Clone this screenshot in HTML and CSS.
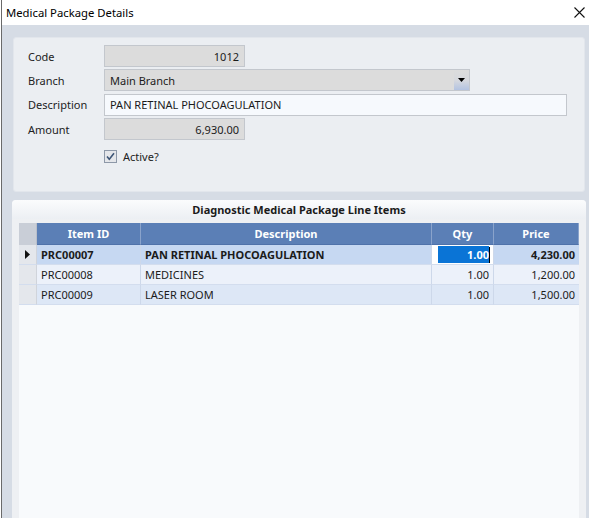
FILE: index.html
```html
<!DOCTYPE html>
<html>
<head>
<meta charset="utf-8">
<link rel="stylesheet" href="styles.css">
</head>
<body>
<div class="window">
  <div class="titlebar">
    <span class="title">Medical Package Details</span>
    <svg class="close" width="11" height="11" viewBox="0 0 11 11"><path d="M0.5 0.5 L10.5 10.5 M10.5 0.5 L0.5 10.5" stroke="#111" stroke-width="1.1" fill="none"/></svg>
  </div>
  <div class="client">
    <div class="panel">
      <div class="form">
        <div class="frow">
          <span class="label">Code</span>
          <div class="field ro w-short num">1012</div>
        </div>
        <div class="frow">
          <span class="label">Branch</span>
          <div class="field ro combo">
            <span class="combo-text">Main Branch</span>
            <span class="combo-btn"><svg width="7" height="4" viewBox="0 0 7 4"><path d="M0 0 H7 L3.5 4 Z" fill="#000"/></svg></span>
          </div>
        </div>
        <div class="frow">
          <span class="label">Description</span>
          <div class="field edit w-long">PAN RETINAL PHOCOAGULATION</div>
        </div>
        <div class="frow">
          <span class="label">Amount</span>
          <div class="field ro w-short num">6,930.00</div>
        </div>
        <div class="crow">
          <svg class="check" width="13" height="13" viewBox="0 0 13 13"><rect x="0.5" y="0.5" width="12" height="12" fill="#e4e6ea" stroke="#8d98a8"/><path d="M3 6.5 L5.3 9.2 L10 3.3" stroke="#3d5576" stroke-width="1.6" fill="none"/></svg>
          <span class="clabel">Active?</span>
        </div>
      </div>
    </div>
    <div class="group">
      <div class="group-title">Diagnostic Medical Package Line Items</div>
      <div class="grid">
        <div class="grow ghead">
          <div class="c ind"></div>
          <div class="c id">Item ID</div>
          <div class="c desc">Description</div>
          <div class="c qty">Qty</div>
          <div class="c price">Price</div>
        </div>
        <div class="grow r1">
          <div class="c ind"><svg width="5" height="9" viewBox="0 0 5 9"><path d="M0 0 L5 4.5 L0 9 Z" fill="#111"/></svg></div>
          <div class="c id">PRC00007</div>
          <div class="c desc">PAN RETINAL PHOCOAGULATION</div>
          <div class="c qty editing"><span class="sel">1.00</span><span class="caret"></span></div>
          <div class="c price">4,230.00</div>
        </div>
        <div class="grow r2">
          <div class="c ind"></div>
          <div class="c id">PRC00008</div>
          <div class="c desc">MEDICINES</div>
          <div class="c qty">1.00</div>
          <div class="c price">1,200.00</div>
        </div>
        <div class="grow r3">
          <div class="c ind"></div>
          <div class="c id">PRC00009</div>
          <div class="c desc">LASER ROOM</div>
          <div class="c qty">1.00</div>
          <div class="c price">1,500.00</div>
        </div>
        <div class="gempty"></div>
      </div>
    </div>
  </div>
</div>
</body>
</html>
```

FILE: styles.css
```css
* { box-sizing: border-box; }
html, body { margin: 0; padding: 0; }
body {
  width: 589px;
  height: 518px;
  overflow: hidden;
  background: #ffffff;
  font-family: "Noto Sans", "Open Sans", sans-serif;
  font-size: 11px;
  color: #1b1b1b;
}
.window {
  margin-left: 1px;
  border-left: 1px solid #6a6a6a;
  height: 518px;
  display: flex;
  flex-direction: column;
}
.titlebar {
  height: 25px;
  flex: none;
  background: #ffffff;
  display: flex;
  align-items: center;
  justify-content: space-between;
  padding: 0 4px 0 4px;
}
.title { font-size: 11.3px; color: #000; }
.close { margin-right: 0; }
.client {
  flex: 1;
  background: #d6dce5;
  padding: 12px 4px 0 11px;
  display: flex;
  flex-direction: column;
  gap: 8px;
}
.panel {
  height: 155px;
  flex: none;
  background: #ebeef2;
  border: 1px solid #e2e6ec;
  border-radius: 3px;
  padding: 7px 0 0 14px;
}
.form { display: flex; flex-direction: column; gap: 2.4px; }
.frow { display: flex; align-items: center; height: 22px; }
.label { width: 76px; flex: none; color: #222; }
.field {
  height: 22px;
  border: 1px solid #c3c7cd;
  display: flex;
  align-items: center;
  padding: 0 5px;
  white-space: nowrap;
}
.ro { background: #dcdcdc; }
.edit { background: #f6f9fd; }
.w-short { width: 141px; }
.w-long { width: 463px; }
.num { justify-content: flex-end; }
.combo { width: 366px; padding: 0 0 0 5px; justify-content: space-between; }
.combo-text { flex: 1; }
.combo-btn {
  width: 15px;
  height: 100%;
  display: flex;
  align-items: center;
  justify-content: center;
  background: linear-gradient(#dcdcdc 0%, #d7d9de 50%, #b3c3e1 100%);
}
.crow { display: flex; align-items: center; margin-top: 7px; padding-left: 76px; gap: 6px; height: 14px; }
.check { flex: none; }
.clabel { color: #222; }
.group {
  flex: 1;
  background: #eef0f3;
  border-radius: 4px 4px 0 0;
  display: flex;
  flex-direction: column;
  padding: 0 4px 0 7px;
  margin-left: -1px;
  margin-right: -1px;
}
.group-title {
  height: 19px;
  flex: none;
  display: flex;
  align-items: center;
  justify-content: center;
  font-weight: bold;
  color: #1b1b1b;
  background: linear-gradient(#fbfcfd, #eceff3);
  margin: 0 -4px 0 -7px;
  border-radius: 4px 4px 0 0;
}
.grid {
  margin-top: 4px;
  flex: 1;
  display: flex;
  flex-direction: column;
  width: 560px;
  background: #f8fafc;
}
.grow { display: flex; height: 20px; flex: none; }
.c {
  height: 100%;
  display: flex;
  align-items: center;
  padding: 0 4px;
  white-space: nowrap;
  border-right: 1px solid #cdd8ea;
  border-bottom: 1px solid #d3ddee;
}
.ind { width: 18px; justify-content: center; padding: 0; background: #e4e7ec; border-right: 1px solid #d0d4db; }
.id { width: 104px; }
.desc { width: 291px; }
.qty { width: 62px; justify-content: flex-end; }
.price { width: 85px; justify-content: flex-end; border-right: none; }
.ghead { height: 22px; }
.ghead .c {
  background: #5b7fb6;
  color: #ffffff;
  font-weight: bold;
  justify-content: center;
  border-right: 1px solid #8aa3cb;
  border-bottom: 1px solid #4f72aa;
}
.ghead .ind { background: #c9ced7; border-right: 1px solid #b9bfca; border-bottom: 1px solid #c9ced7; }
.r1 .c { background: #c6d8f2; font-weight: bold; }
.r1 .ind { background: #e4e7ec; font-weight: normal; }
.r1 .editing { background: #ffffff; padding: 0 3px 0 6px; }
.sel {
  background: #0a74d6;
  color: #ffffff;
  flex: 1;
  text-align: right;
  height: 17px;
  line-height: 17px;
}
.caret { width: 1px; height: 16px; background: #000; }
.r2 .c { background: #ecf1fa; }
.r3 .c { background: #dde7f6; }
.r2 .ind, .r3 .ind { background: #e4e7ec; }
.gempty { flex: 1; background: #f8fafc; }
```
